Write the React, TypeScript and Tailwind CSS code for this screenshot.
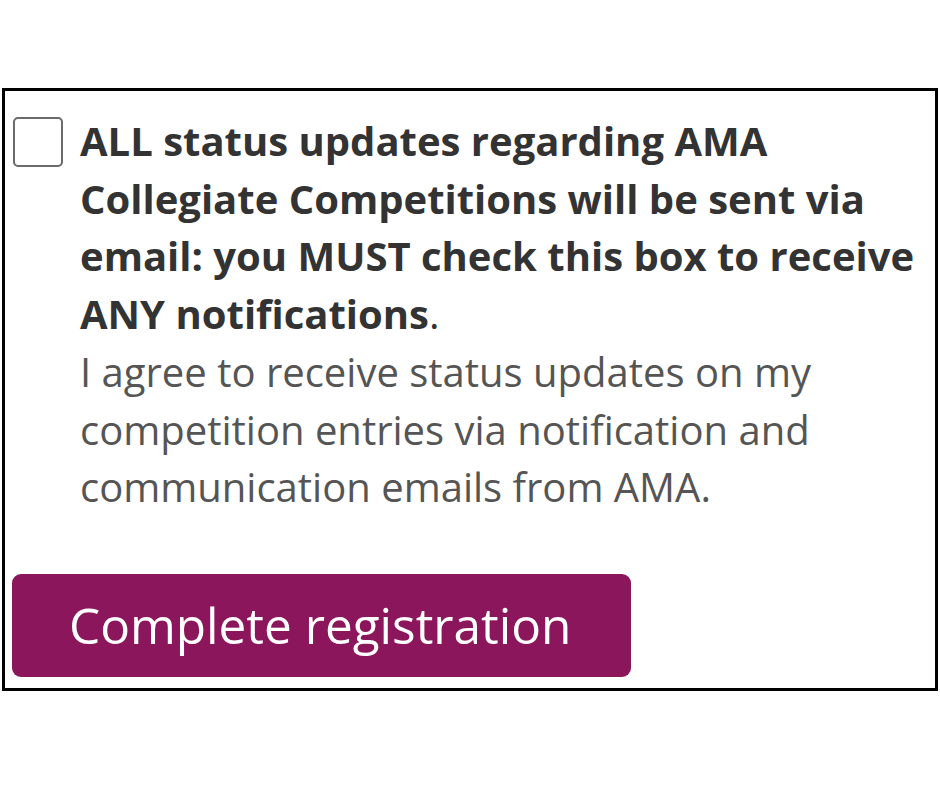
export default function App() {
  return (
    <div className="w-[940px] h-[788px] bg-white pt-[88px] px-[2px]" style={{ fontFamily: '"Open Sans", sans-serif' }}>
      <div className="border-[3px] border-black h-[603px] pl-[8px] pt-[21px]">
        <div className="flex items-start gap-[17px]">
          <div className="mt-[5px] w-[50px] h-[50px] shrink-0 rounded-[5px] border-[2px] border-[#6b6b6b] bg-white" />
          <div className="text-[40px] leading-[57.7px] pr-[8px]">
            <p className="font-bold text-[#333333]">
              ALL status updates regarding AMA Collegiate Competitions will be sent via email: you MUST check this box to receive ANY notifications<span className="font-normal">.</span>
            </p>
            <p className="text-[#555555] pr-[60px]">
              I agree to receive status updates on my competition entries via notification and communication emails from AMA.
            </p>
          </div>
        </div>
        <button className="mt-[58px] -ml-[1px] w-[619px] h-[103px] rounded-[9px] bg-[#8c165c] text-white text-[49.5px] text-left pl-[57px]">
          Complete registration
        </button>
      </div>
    </div>
  );
}
